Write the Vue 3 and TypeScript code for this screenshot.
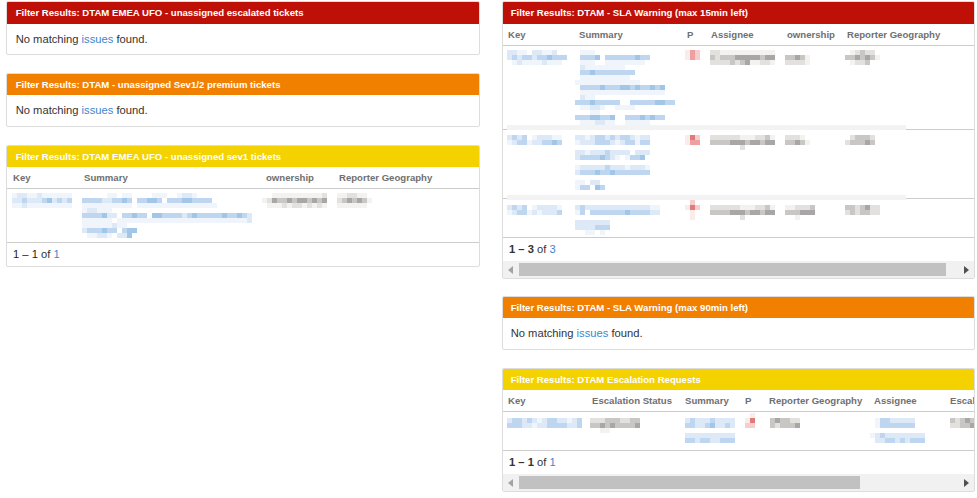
<script setup lang="ts">
type Tone = 'b' | 'g' | 'r'
interface Blur { tone: Tone; x: number; rows: string[] }
interface Row { h: number; top: number; strip?: number; cells: Blur[] }
interface Table {
  heads: { label: string; x: number }[]
  rows: Row[]
}

const palette: Record<Tone, string[]> = {
  b: ['', '#f0f5fb', '#dde9f6', '#bed6ef', '#a2c6e7'],
  g: ['', '#f4f2ef', '#e3e1de', '#c9c7c5', '#a9a6a8'],
  r: ['', '#fbecec', '#f7cccc', '#ee9f9f', '#e27a7a']
}

function rects(b: Blur) {
  const out: { x: number; y: number; c: string }[] = []
  b.rows.forEach((r, y) => {
    ;[...r].forEach((d, x) => {
      if (d !== '0') out.push({ x: x * 5, y: y * 5, c: palette[b.tone][Number(d)] })
    })
  })
  return out
}
const bw = (b: Blur) => Math.max(...b.rows.map((r) => r.length)) * 5
const bh = (b: Blur) => b.rows.length * 5

const leftTable: Table = {
  heads: [
    { label: 'Key', x: 6 },
    { label: 'Summary', x: 77 },
    { label: 'ownership', x: 259 },
    { label: 'Reporter Geography', x: 332 }
  ],
  rows: [
    {
      h: 54,
      top: 4,
      cells: [
        { tone: 'b', x: 5, rows: ['122112111111', '223222342323', '112111111111'] },
        {
          tone: 'b',
          x: 75,
          rows: [
            '0000011011000011100122100000',
            '3333223343033443033344333300',
            '1111111111011111111111111110',
            '1221110000000000000000000000000000',
            '3333422033433044333323433333433432',
            '1111110111111111111111111111111112',
            '1111112110000',
            '233343303440',
            '011221022400'
          ]
        },
        { tone: 'g', x: 255, rows: ['0011111111112', '1243343443434', '0111212212121'] },
        { tone: 'g', x: 330, rows: ['1122110', '2343431', '1111110'] }
      ]
    }
  ]
}

const rightTop: Table = {
  heads: [
    { label: 'Key', x: 5 },
    { label: 'Summary', x: 76 },
    { label: 'P', x: 184 },
    { label: 'Assignee', x: 208 },
    { label: 'ownership', x: 284 },
    { label: 'Reporter Geography', x: 344 }
  ],
  rows: [
    {
      h: 84,
      top: 4,
      strip: 79,
      cells: [
        { tone: 'b', x: 4, rows: ['221102211200', '232332334333', '012111121110'] },
        {
          tone: 'b',
          x: 72,
          rows: [
            '01110000000000000000',
            '03334033333343300000',
            '01110011111111000000',
            '02111111110000000000',
            '03343333333300000000',
            '01111111111000000000',
            '11111111111110000000',
            '03333433344343343400',
            '01111111111111111100',
            '02110000000000000000',
            '33343333300333334433',
            '01122100111100000000',
            '00011000000000000000',
            '33344334003334343300',
            '01112211001111100000'
          ]
        },
        { tone: 'r', x: 182, rows: ['132', '132', '000'] },
        { tone: 'g', x: 207, rows: ['2211111111111', '3233344444344', '2222323411221'] },
        { tone: 'g', x: 282, rows: ['00000', '33431', '22221'] },
        { tone: 'g', x: 342, rows: ['0123220', '3343431', '0122300'] }
      ]
    },
    {
      h: 69,
      top: 5,
      strip: 65,
      cells: [
        { tone: 'b', x: 4, rows: ['232301222110', '123312233430'] },
        {
          tone: 'b',
          x: 72,
          rows: [
            '221233232332122',
            '122233321233133',
            '000000000000000',
            '221222322220222',
            '233334321013340',
            '000000000000000',
            '122222322212221',
            '233343343333333',
            '000000000000000',
            '110220',
            '133043',
            '000000'
          ]
        },
        { tone: 'r', x: 182, rows: ['142', '133', '000'] },
        { tone: 'g', x: 207, rows: ['2222221112231', '3333444344344', '0000002000000'] },
        { tone: 'g', x: 282, rows: ['22210', '33431', '00000'] },
        { tone: 'g', x: 342, rows: ['0233320', '2333430'] }
      ]
    },
    {
      h: 39,
      top: 1,
      cells: [
        { tone: 'b', x: 4, rows: ['000000000000', '232301222210', '123312122230'] },
        {
          tone: 'b',
          x: 72,
          rows: [
            '000000000000000000',
            '232222222222222110',
            '130333333343333220',
            '000000000000000000',
            '222222200000000000',
            '222233300000000000',
            '001101000000000000'
          ]
        },
        { tone: 'r', x: 182, rows: ['020', '142', '010', '010'] },
        { tone: 'g', x: 207, rows: ['0000000000000', '2222221112231', '3333444344344', '0000002000000'] },
        { tone: 'g', x: 282, rows: ['00000000', '112223', '333444', '001000'] },
        { tone: 'g', x: 342, rows: ['0000000', '3323422', '2323322'] }
      ]
    }
  ]
}

const rightBottom: Table = {
  heads: [
    { label: 'Key', x: 5 },
    { label: 'Escalation Status', x: 89 },
    { label: 'Summary', x: 182 },
    { label: 'P', x: 242 },
    { label: 'Reporter Geography', x: 266 },
    { label: 'Assignee', x: 371 },
    { label: 'Escalation Reason', x: 447 }
  ],
  rows: [
    {
      h: 39,
      top: 1,
      cells: [
        { tone: 'b', x: 4, rows: ['000000000000000', '233232123322123', '333221223333223'] },
        { tone: 'g', x: 87, rows: ['0000000000', '2223332233', '3343433334', '0011000000'] },
        {
          tone: 'b',
          x: 182,
          rows: ['0000000000', '2322232222', '3322342232', '0000000000', '2222222222', '3323322333']
        },
        { tone: 'r', x: 242, rows: ['010', '140', '220'] },
        { tone: 'g', x: 267, rows: ['000000', '343322', '323334'] },
        {
          tone: 'b',
          x: 367,
          rows: ['00000000000', '01332222200', '01333333300', '00000000000', '12322222222', '02233232333']
        },
        { tone: 'g', x: 447, rows: ['000000', '323434', '223343'] }
      ]
    }
  ]
}
</script>

<template>
  <div class="page">
    <section class="col col-left">
      <article class="card">
        <header class="bar red tall">Filter Results: DTAM EMEA UFO - unassigned escalated tickets</header>
        <p class="empty first">No matching <a>issues</a> found.</p>
      </article>
      <article class="card">
        <header class="bar orange">Filter Results: DTAM - unassigned Sev1/2 premium tickets</header>
        <p class="empty">No matching <a>issues</a> found.</p>
      </article>
      <article class="card">
        <header class="bar yellow">Filter Results: DTAM EMEA UFO - unassigned sev1 tickets</header>
        <div class="tbl">
          <div class="thead">
            <span v-for="h in leftTable.heads" :key="h.label" class="th" :style="{ left: h.x + 'px' }">{{ h.label }}</span>
          </div>
          <div v-for="(r, i) in leftTable.rows" :key="i" class="tr" :style="{ height: r.h + 'px' }">
            <svg
              v-for="(c, j) in r.cells"
              :key="j"
              class="blur"
              :width="bw(c)"
              :height="bh(c)"
              :style="{ left: c.x + 'px', top: r.top + 'px' }"
            >
              <rect v-for="(q, k) in rects(c)" :key="k" :x="q.x" :y="q.y" width="5" height="5" :fill="q.c" />
            </svg>
          </div>
        </div>
        <div class="foot"><b>1 – 1</b> of <a>1</a></div>
      </article>
    </section>

    <section class="col col-right">
      <article class="card tight">
        <header class="bar red tall">Filter Results: DTAM - SLA Warning (max 15min left)</header>
        <div class="tbl">
          <div class="thead">
            <span v-for="h in rightTop.heads" :key="h.label" class="th" :style="{ left: h.x + 'px' }">{{ h.label }}</span>
          </div>
          <div v-for="(r, i) in rightTop.rows" :key="i" class="tr" :style="{ height: r.h + 'px' }">
            <svg
              v-for="(c, j) in r.cells"
              :key="j"
              class="blur"
              :width="bw(c)"
              :height="bh(c)"
              :style="{ left: c.x + 'px', top: r.top + 'px' }"
            >
              <rect v-for="(q, k) in rects(c)" :key="k" :x="q.x" :y="q.y" width="5" height="5" :fill="q.c" />
            </svg>
            <i v-if="r.strip" class="strip" :style="{ top: r.strip + 'px' }"></i>
          </div>
        </div>
        <div class="foot"><b class="strong">1 – 3</b> of <a>3</a></div>
        <div class="scroll">
          <span class="arrow left"></span>
          <div class="rail"><span class="thumb thumb-long"></span></div>
          <span class="arrow right"></span>
        </div>
      </article>

      <article class="card">
        <header class="bar orange">Filter Results: DTAM - SLA Warning (max 90min left)</header>
        <p class="empty">No matching <a>issues</a> found.</p>
      </article>

      <article class="card">
        <header class="bar yellow">Filter Results: DTAM Escalation Requests</header>
        <div class="tbl">
          <div class="thead">
            <span v-for="h in rightBottom.heads" :key="h.label" class="th" :style="{ left: h.x + 'px' }">{{ h.label }}</span>
          </div>
          <div v-for="(r, i) in rightBottom.rows" :key="i" class="tr" :style="{ height: r.h + 'px' }">
            <svg
              v-for="(c, j) in r.cells"
              :key="j"
              class="blur"
              :width="bw(c)"
              :height="bh(c)"
              :style="{ left: c.x + 'px', top: r.top + 'px' }"
            >
              <rect v-for="(q, k) in rects(c)" :key="k" :x="q.x" :y="q.y" width="5" height="5" :fill="q.c" />
            </svg>
          </div>
        </div>
        <div class="foot"><b class="strong">1 – 1</b> of <a>1</a></div>
        <div class="scroll">
          <span class="arrow left"></span>
          <div class="rail"><span class="thumb thumb-short"></span></div>
          <span class="arrow right"></span>
        </div>
      </article>
    </section>
  </div>
</template>

<style scoped>
.page {
  display: flex;
  gap: 22px;
  padding: 1px 2px 0 6px;
  width: 977px;
  height: 498px;
  box-sizing: border-box;
  overflow: hidden;
  font-family: "Liberation Sans", Arial, sans-serif;
  font-size: 11.2px;
  color: #333;
  background: #fff;
}
.col {
  display: flex;
  flex-direction: column;
  gap: 18px;
  flex: none;
}
.col-left { width: 474px; }
.col-right { width: 473px; }
.card {
  border: 1px solid #ddd;
  border-radius: 2px;
  background: #fff;
  overflow: hidden;
}
.card.tight { margin-bottom: -1px; }
.bar {
  height: 21px;
  line-height: 21px;
  padding-left: 8.7px;
  color: #fff;
  font-weight: 700;
  font-size: 9.6px;
}
.col-right .bar { padding-left: 7.7px; }
.bar.tall { height: 22px; line-height: 22px; }
.red { background: #bf1008; }
.orange { background: #f28000; }
.yellow { background: #f3d200; }
.empty {
  margin: 0;
  height: 31px;
  line-height: 31px;
  padding-left: 8.7px;
}
.col-right .empty { padding-left: 7.7px; }
.empty.first { height: 30px; line-height: 30px; }
a { color: #3b87cf; }
.tbl {
  overflow: hidden;
  width: 100%;
}
.thead {
  position: relative;
  height: 22px;
  border-bottom: 1px solid #ccc;
  box-sizing: border-box;
  line-height: 21px;
  font-size: 9.6px;
  font-weight: 700;
  color: #707070;
}
.th {
  position: absolute;
  top: 0;
  white-space: nowrap;
}
.tr {
  position: relative;
  box-sizing: border-box;
  border-bottom: 1px solid #ccc;
}
.blur {
  position: absolute;
  display: block;
  shape-rendering: crispEdges;
}
.strip {
  position: absolute;
  left: 4px;
  width: 399px;
  height: 5px;
  background: #f3f3f3;
}
.foot {
  height: 23px;
  line-height: 23px;
  padding-left: 6px;
}
.foot b { font-weight: 400; color: #222; }
.foot b.strong { font-weight: 700; color: #333; }
.scroll {
  display: flex;
  align-items: center;
  height: 17px;
  background: #f1f1f1;
}
.arrow {
  flex: none;
  width: 0;
  height: 0;
  border-top: 4px solid transparent;
  border-bottom: 4px solid transparent;
}
.arrow.left {
  margin: 0 6px 0 5px;
  border-right: 5px solid #a3a3a3;
}
.arrow.right {
  margin: 0 5px 0 0;
  border-left: 5px solid #505050;
}
.rail { flex: 1; display: flex; }
.thumb {
  display: block;
  height: 13px;
  background: #c1c1c1;
}
.thumb-long { width: 427px; }
.thumb-short { width: 341px; }
</style>

<style>
html, body { margin: 0; background: #fff; }
</style>
